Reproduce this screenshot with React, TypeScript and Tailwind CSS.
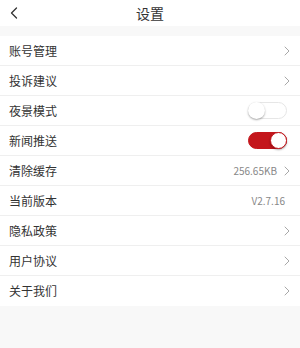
import type React from 'react'
import { useState } from 'react'

const font = { fontFamily: '"Noto Sans CJK SC", "Noto Sans", sans-serif' }

function Chevron({ className = '' }: { className?: string }) {
  return (
    <svg width="6" height="10" viewBox="0 0 6 10" className={className} fill="none">
      <path d="M1 1l4 4-4 4" stroke="#a8a8a8" strokeWidth="1" strokeLinecap="round" strokeLinejoin="round" />
    </svg>
  )
}

function Toggle({ on, onClick }: { on: boolean; onClick: () => void }) {
  return (
    <button
      onClick={onClick}
      className={
        'relative mr-[3px] h-[17px] w-[39px] rounded-full border ' +
        (on ? 'border-[#c4161c] bg-[#c4161c]' : 'border-[#e6e6e6] bg-white')
      }
    >
      <span
        className={
          'absolute top-[-1px] h-[17px] w-[17px] rounded-full bg-white shadow-[0_1px_2px_rgba(0,0,0,0.35)] ' +
          (on ? 'right-[-1px] border border-[#c4161c]' : 'left-[-1px]')
        }
      />
    </button>
  )
}

function Row({ label, right, last }: { label: string; right: React.ReactNode; last?: boolean }) {
  return (
    <div className={'flex h-[30px] items-center justify-between pr-[10px] pl-[9px] ' + (last ? '' : 'border-b border-[#efefef]')}>
      <span className="text-[12px] text-[#333]">{label}</span>
      <div className="flex items-center gap-[7px]">{right}</div>
    </div>
  )
}

export default function App() {
  const [night, setNight] = useState(false)
  const [push, setPush] = useState(true)

  return (
    <div className="min-h-[348px] w-[300px] bg-[#f8f8f8]" style={font}>
      <header className="relative flex h-[26px] items-center justify-center bg-white">
        <svg width="8" height="12" viewBox="0 0 8 12" className="absolute top-[7px] left-[10px]" fill="none">
          <path d="M6.5 1L1.5 6l5 5" stroke="#333" strokeWidth="1.3" strokeLinecap="round" strokeLinejoin="round" />
        </svg>
        <span className="text-[14px] text-[#333]">设置</span>
      </header>

      <div className="mt-[10px] bg-white">
        <Row label="账号管理" right={<Chevron />} />
        <Row label="投诉建议" right={<Chevron />} />
        <Row label="夜景模式" right={<Toggle on={night} onClick={() => setNight(!night)} />} />
        <Row label="新闻推送" right={<Toggle on={push} onClick={() => setPush(!push)} />} />
        <Row
          label="清除缓存"
          right={
            <>
              <span className="text-[10px] text-[#888]">256.65KB</span>
              <Chevron />
            </>
          }
        />
        <Row label="当前版本" right={<span className="pr-[5px] text-[10px] text-[#888]">V2.7.16</span>} />
        <Row label="隐私政策" right={<Chevron />} />
        <Row label="用户协议" right={<Chevron />} />
        <Row label="关于我们" right={<Chevron />} last />
      </div>
    </div>
  )
}
